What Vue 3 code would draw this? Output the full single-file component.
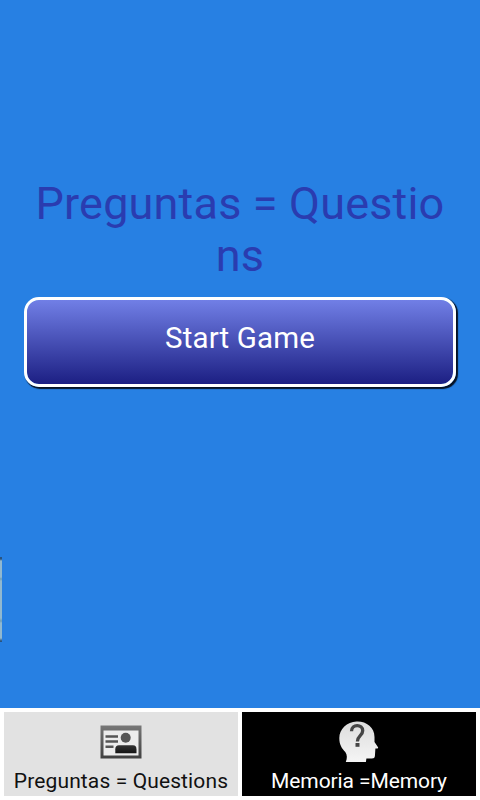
<script setup>
const titleLines = ['Preguntas = Questio', 'ns']
</script>

<template>
  <main class="screen">
    <section class="game">
      <h1 class="title">
        <span v-for="line in titleLines" :key="line" class="line">{{ line }}</span>
      </h1>
      <button class="start" type="button">Start Game</button>
      <div class="handle"></div>
    </section>
    <nav class="tabs">
      <div class="tab light">
        <svg class="card-icon" width="42" height="34" viewBox="0 0 42 34">
          <defs>
            <linearGradient id="frame" x1="0" y1="0" x2="0" y2="1">
              <stop offset="0" stop-color="#777" />
              <stop offset="1" stop-color="#404040" />
            </linearGradient>
            <linearGradient id="bust" x1="0" y1="0" x2="0" y2="1">
              <stop offset="0" stop-color="#333" />
              <stop offset="1" stop-color="#151515" />
            </linearGradient>
          </defs>
          <path fill="url(#frame)" d="M.5.5h41v33H.5z" />
          <path fill="#ececec" d="M3.500 5.500h35v25h-35z" />
          <path d="M5.500 11.500h12.500M5.500 16.500h12.500M5.500 21.700h8" stroke="#555" stroke-width="2.400" />
          <circle cx="25.700" cy="12.800" r="5" fill="#555" />
          <path fill="url(#bust)" d="M15.300 28.200v-4q0-4 3.700-4h14q3.500 0 3.500 4v4z" />
        </svg>
        <span class="label left">Preguntas = Questions</span>
      </div>
      <div class="tab dark">
        <svg class="head-icon" width="40" height="42" viewBox="0 0 40 42">
          <defs>
            <linearGradient id="head" x1="0" y1="0" x2="0" y2="1">
              <stop offset="0" stop-color="#dcdcdc" />
              <stop offset="1" stop-color="#f5f5f5" />
            </linearGradient>
          </defs>
          <path fill="url(#head)" d="M17.500.5C27 0 35.500 6 35.500 16v5l3.700 5.500-.5 1h-2.300l-.5 7.500q-.2 2.500-3 2.500h-5.500l-.5 3.500H6.800c1.500-4 1.500-7-.5-10C3 27.500.3 24 .3 17 .3 8 8 1 17.500.5z" />
          <path d="M12.500 10.300C12.600 2.800 23.700 2.800 23.700 9.700c0 5-5.300 5-5.300 10.800" fill="none" stroke="#454545" stroke-width="3.300" />
          <path fill="#454545" d="M16.500 22h4v3.800h-4z" />
        </svg>
        <span class="label right">Memoria =Memory</span>
      </div>
    </nav>
  </main>
</template>

<style>
body {
  margin: 0;
}
</style>

<style scoped>
.screen {
  width: 480px;
  height: 800px;
  display: flex;
  flex-direction: column;
  overflow: hidden;
  background: #fff;
  font-family: Roboto, "Liberation Sans", sans-serif;
}
.game {
  position: relative;
  box-sizing: border-box;
  height: 708px;
  padding: 178px 24px 0;
  background: #2780e3;
}
.title {
  margin: 0;
  height: 119px;
  font-size: 45px;
  font-weight: 400;
  line-height: 52px;
  color: #2a3cb0;
  text-align: center;
  white-space: nowrap;
}
.line {
  display: block;
  letter-spacing: 0.17px;
}
.start {
  display: block;
  box-sizing: border-box;
  width: 432px;
  height: 90px;
  padding: 0 0 8px;
  border: 3px solid #fff;
  border-radius: 15px;
  background: linear-gradient(#717fe6, #1c1f83) padding-box;
  box-shadow: 1.5px 1.5px 1px #061225;
  color: #fff;
  font-family: inherit;
  font-size: 29.5px;
  letter-spacing: 0.15px;
}
.handle {
  position: absolute;
  left: 0;
  top: 557px;
  width: 2px;
  height: 85px;
  background: linear-gradient(#285482 0 2px, #91b8cf 4px 20px, #6f9eb9 22px, #91b8cf 24px 61px, #6f9eb9 64px, #91b8cf 66px 81px, #285482 84px);
}
.tabs {
  display: grid;
  grid-template-columns: 234px 234px;
  gap: 4px;
  height: 84px;
  padding: 4px;
}
.tab {
  display: flex;
  flex-direction: column;
  align-items: center;
  overflow: hidden;
}
.light {
  background: #e2e2e2;
  color: #111;
}
.dark {
  background: #000;
  color: #fff;
}
.card-icon {
  margin-top: 13px;
  filter: blur(0.4px);
}
.head-icon {
  margin-top: 9px;
  filter: blur(0.3px);
}
.label {
  font-size: 21px;
  line-height: 24px;
  white-space: nowrap;
}
.left {
  margin-top: 10px;
  letter-spacing: 0.12px;
}
.right {
  margin-top: 6px;
  letter-spacing: -0.1px;
}
</style>
